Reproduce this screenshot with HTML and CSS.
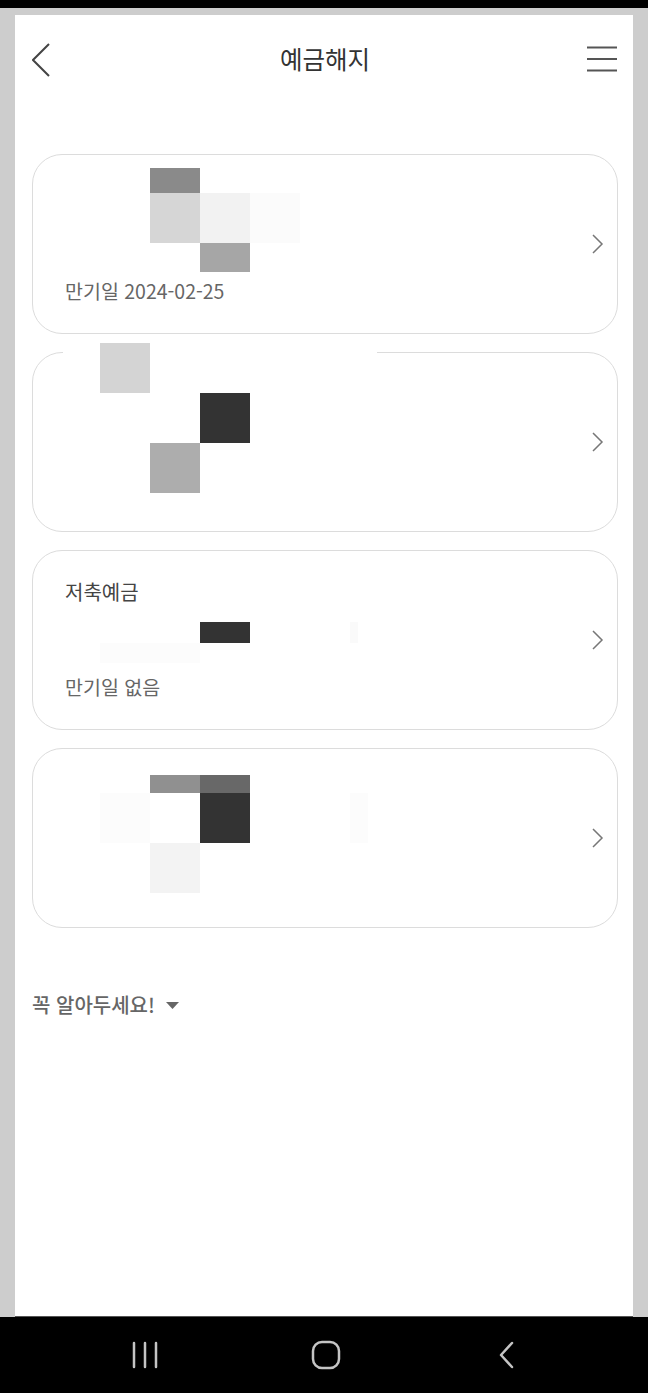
FILE: index.html
```html
<!DOCTYPE html>
<html lang="ko">
  <head>
    <meta charset="UTF-8" />
    <meta name="viewport" content="width=device-width, initial-scale=1.0" />
    <title>예금해지</title>
    <link rel="stylesheet" href="styles.css">
  </head>
  <body>
    <div class="status-bar"></div>

    <div class="frame">
      <div class="screen">
        <header class="top-bar">
          <button class="icon-btn" aria-label="뒤로">
            <svg width="18" height="34" viewBox="0 0 18 34">
              <polyline points="17,1 1,17 17,33" fill="none" stroke="#444" stroke-width="2" />
            </svg>
          </button>
          <h1 class="title">예금해지</h1>
          <button class="icon-btn" aria-label="메뉴">
            <svg width="30" height="26" viewBox="0 0 30 26">
              <line x1="0" y1="1.5" x2="30" y2="1.5" stroke="#555" stroke-width="2" />
              <line x1="0" y1="13" x2="30" y2="13" stroke="#555" stroke-width="2" />
              <line x1="0" y1="24.5" x2="30" y2="24.5" stroke="#555" stroke-width="2" />
            </svg>
          </button>
        </header>

        <ul class="account-list">
          <li class="account">
            <div class="account-info">
              <p class="account-name"></p>
              <p class="account-amount"></p>
              <p class="account-due">만기일 2024-02-25</p>
            </div>
            <svg class="chevron" width="12" height="20" viewBox="0 0 12 20">
              <polyline points="1,1 10,10 1,19" fill="none" stroke="#777" stroke-width="1.5" />
            </svg>
            <div class="mosaic">
              <span class="cell c1a"></span>
              <span class="cell c1b"></span>
              <span class="cell c1c"></span>
              <span class="cell c1d"></span>
              <span class="cell c1e"></span>
            </div>
          </li>

          <li class="account">
            <div class="account-info">
              <p class="account-name"></p>
              <p class="account-amount"></p>
              <p class="account-due"></p>
            </div>
            <svg class="chevron" width="12" height="20" viewBox="0 0 12 20">
              <polyline points="1,1 10,10 1,19" fill="none" stroke="#777" stroke-width="1.5" />
            </svg>
            <div class="mosaic">
              <span class="cell c2cover"></span>
              <span class="cell c2a"></span>
              <span class="cell c2b"></span>
              <span class="cell c2c"></span>
            </div>
          </li>

          <li class="account">
            <div class="account-info">
              <p class="account-name">저축예금</p>
              <p class="account-amount"></p>
              <p class="account-due">만기일 없음</p>
            </div>
            <svg class="chevron" width="12" height="20" viewBox="0 0 12 20">
              <polyline points="1,1 10,10 1,19" fill="none" stroke="#777" stroke-width="1.5" />
            </svg>
            <div class="mosaic">
              <span class="cell c3a"></span>
              <span class="cell c3b"></span>
              <span class="cell c3c"></span>
            </div>
          </li>

          <li class="account">
            <div class="account-info">
              <p class="account-name"></p>
              <p class="account-amount"></p>
              <p class="account-due"></p>
            </div>
            <svg class="chevron" width="12" height="20" viewBox="0 0 12 20">
              <polyline points="1,1 10,10 1,19" fill="none" stroke="#777" stroke-width="1.5" />
            </svg>
            <div class="mosaic">
              <span class="cell c4a"></span>
              <span class="cell c4b"></span>
              <span class="cell c4c"></span>
              <span class="cell c4d"></span>
              <span class="cell c4e"></span>
              <span class="cell c4f"></span>
            </div>
          </li>
        </ul>

        <button class="notice-toggle">
          꼭 알아두세요!
          <svg width="13" height="7" viewBox="0 0 13 7">
            <polygon points="0,0 13,0 6.5,7" fill="#666" />
          </svg>
        </button>
      </div>
    </div>

    <nav class="nav-bar">
      <span class="nav-item">
        <svg width="26" height="28" viewBox="0 0 26 28">
          <line x1="2" y1="2" x2="2" y2="26" stroke="#c4c4c4" stroke-width="2.5" stroke-linecap="round" />
          <line x1="13" y1="2" x2="13" y2="26" stroke="#c4c4c4" stroke-width="2.5" stroke-linecap="round" />
          <line x1="24" y1="2" x2="24" y2="26" stroke="#c4c4c4" stroke-width="2.5" stroke-linecap="round" />
        </svg>
      </span>
      <span class="nav-item">
        <svg width="30" height="30" viewBox="0 0 30 30">
          <rect x="2" y="2" width="26" height="26" rx="9" fill="none" stroke="#c4c4c4" stroke-width="2.5" />
        </svg>
      </span>
      <span class="nav-item">
        <svg width="18" height="28" viewBox="0 0 18 28">
          <polyline points="14,2 3,14 14,26" fill="none" stroke="#c4c4c4" stroke-width="2.5" stroke-linecap="round" stroke-linejoin="round" />
        </svg>
      </span>
    </nav>
  </body>
</html>
```

FILE: styles.css
```css
* {
  box-sizing: border-box;
  margin: 0;
  padding: 0;
}

body {
  font-family: "Noto Sans CJK KR", "Noto Sans", sans-serif;
  background: #000;
  width: 648px;
  height: 1393px;
  overflow: hidden;
}

.status-bar {
  height: 8px;
  background: #000;
}

.frame {
  background: #cdcdcd;
  padding: 7px 15px 0;
}

.screen {
  background: #fff;
  height: 1302px;
  padding: 0 15px 0 17px;
  border-bottom: 1px solid #555;
}

/* Header */
.top-bar {
  height: 90px;
  display: flex;
  align-items: center;
  justify-content: space-between;
  position: relative;
}

.icon-btn {
  background: none;
  border: none;
  display: flex;
  align-items: center;
}

.top-bar .icon-btn:last-child {
  margin-right: 1px;
  margin-top: -2px;
}

.title {
  font-size: 24.5px;
  font-weight: 400;
  color: #333;
  position: absolute;
  left: 0;
  right: 0;
  top: 28px;
  line-height: 32px;
  text-align: center;
  pointer-events: none;
}

/* Account cards */
.account-list {
  list-style: none;
  margin-top: 49px;
  display: flex;
  flex-direction: column;
  gap: 18px;
}

.account {
  position: relative;
  height: 180px;
  border: 1px solid #dcdcdc;
  border-radius: 30px;
  display: flex;
  align-items: center;
  padding: 29px 13px 29px 32px;
}

.account-info {
  flex: 1;
  display: flex;
  flex-direction: column;
  height: 100%;
}

.account-name {
  font-size: 20px;
  line-height: 24px;
  height: 24px;
  color: #444;
}

.account-amount {
  height: 36px;
  margin-top: 10px;
}

.account-due {
  font-size: 19.5px;
  line-height: 24px;
  height: 24px;
  margin-top: 25px;
  color: #666;
}

.chevron {
  flex-shrink: 0;
}

/* Redacted (pixelated) blocks */
.mosaic {
  position: absolute;
  inset: 0;
  pointer-events: none;
}

.cell {
  position: absolute;
  display: block;
}

.c1a { left: 117px; top: 13px; width: 50px; height: 25px; background: #8a8a8a; }
.c1b { left: 117px; top: 38px; width: 50px; height: 50px; background: #d6d6d6; }
.c1c { left: 167px; top: 38px; width: 50px; height: 50px; background: #f2f2f2; }
.c1d { left: 217px; top: 38px; width: 50px; height: 50px; background: #fbfbfb; }
.c1e { left: 167px; top: 88px; width: 50px; height: 29px; background: #a6a6a6; }

.c2cover { left: 30px; top: -10px; width: 314px; height: 12px; background: #fff; }
.c2a { left: 67px; top: -10px; width: 50px; height: 50px; background: #d4d4d4; }
.c2b { left: 167px; top: 40px; width: 50px; height: 50px; background: #333; }
.c2c { left: 117px; top: 90px; width: 50px; height: 50px; background: #adadad; }

.c3a { left: 167px; top: 71px; width: 50px; height: 21px; background: #333; }
.c3b { left: 67px; top: 92px; width: 100px; height: 20px; background: #fcfcfc; }
.c3c { left: 317px; top: 71px; width: 8px; height: 21px; background: #fafafa; }

.c4a { left: 117px; top: 26px; width: 50px; height: 18px; background: #909090; }
.c4b { left: 167px; top: 26px; width: 50px; height: 18px; background: #686868; }
.c4c { left: 167px; top: 44px; width: 50px; height: 50px; background: #333; }
.c4d { left: 67px; top: 44px; width: 50px; height: 50px; background: #fcfcfc; }
.c4e { left: 117px; top: 94px; width: 50px; height: 50px; background: #f3f3f3; }
.c4f { left: 317px; top: 44px; width: 18px; height: 50px; background: #fcfcfc; }

/* Notice */
.notice-toggle {
  margin-top: 62px;
  background: none;
  border: none;
  font-family: inherit;
  font-size: 20px;
  font-weight: 500;
  line-height: 30px;
  color: #666;
  display: flex;
  align-items: center;
  gap: 11px;
}

/* System navigation */
.nav-bar {
  height: 76px;
  background: #000;
  display: flex;
  align-items: center;
  gap: 141px;
  padding-left: 125px;
}

.nav-item {
  width: 40px;
  display: flex;
  justify-content: center;
}
```
